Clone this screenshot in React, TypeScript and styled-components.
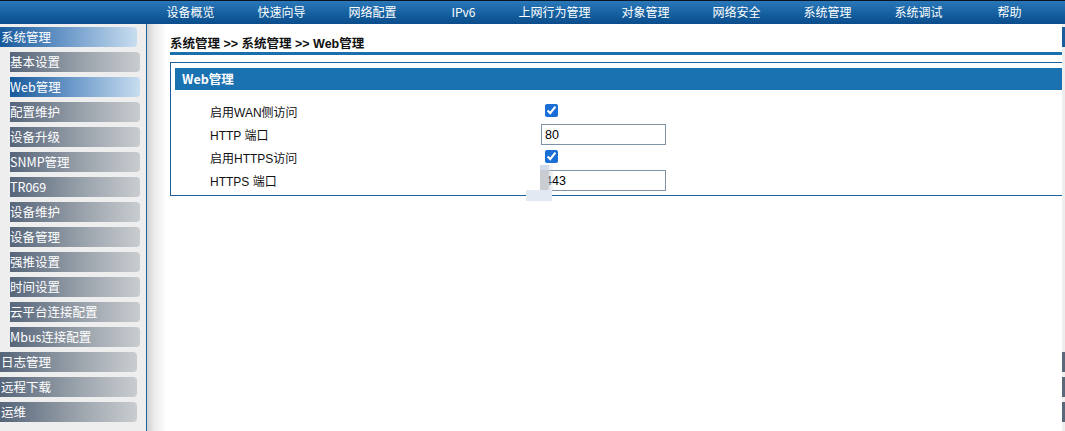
import React from "react";
import styled, { createGlobalStyle, css } from "styled-components";

const GlobalStyle = createGlobalStyle`
  html, body {
    margin: 0;
    padding: 0;
    background: #ffffff;
    overflow: hidden;
  }
  body {
    font-family: "Liberation Sans", "Noto Sans CJK SC", sans-serif;
  }
`;

const Page = styled.div`
  position: relative;
  width: 1065px;
  height: 431px;
  display: flex;
  flex-direction: column;
  overflow: hidden;
`;

/* 상단 메뉴 바 */
const TopBar = styled.nav`
  height: 24px;
  box-sizing: border-box;
  border-top: 1px solid #0a1626;
  background: linear-gradient(to bottom, #2a77b9 0%, #15609f 55%, #0b4c8c 100%);
  display: flex;
  padding-left: 145px;
`;

const NavItem = styled.div`
  width: 91px;
  text-align: center;
  color: #ffffff;
  font-family: "Noto Sans CJK SC", sans-serif;
  font-size: 12px;
  line-height: 21px;
  white-space: nowrap;
`;

const Body = styled.div`
  flex: 1;
  display: flex;
  min-height: 0;
`;

const Sidebar = styled.aside`
  width: 146px;
  flex-shrink: 0;
  background: #eeeeee;
  border-right: 1px solid #1f5f9f;
  padding-top: 3px;
  display: flex;
  flex-direction: column;
  gap: 5px;
  overflow: hidden;
`;

const MenuItem = styled.div<{ $sub?: boolean; $active?: boolean }>`
  height: 20px;
  box-sizing: border-box;
  margin-left: ${(p) => (p.$sub ? "10px" : "0")};
  width: ${(p) => (p.$sub ? "130px" : "137px")};
  border-radius: 0 4px 4px 0;
  background: ${(p) =>
    p.$active
      ? "linear-gradient(to right, #17599b 0%, #6f9ccb 50%, #c8ddef 100%)"
      : "linear-gradient(to right, #56657a 0%, #939ca6 50%, #c9cdd0 100%)"};
  color: #ffffff;
  font-family: "Noto Sans CJK SC", sans-serif;
  font-size: 12.5px;
  line-height: 19px;
  padding-left: ${(p) => (p.$sub ? "0" : "1px")};
  white-space: nowrap;
  overflow: hidden;
`;

const Main = styled.main`
  flex: 1;
  min-width: 0;
  overflow: hidden;
  background: linear-gradient(to right, #d2d2d2 0px, #ececec 8px, #ffffff 20px);
  padding-left: 23px;
`;

const Breadcrumb = styled.div`
  margin-right: -20px;
  padding: 13px 0 1px;
  line-height: 14px;
  font-size: 12.5px;
  font-weight: 700;
  color: #111111;
  border-bottom: 3px solid #1a6fad;
  white-space: nowrap;
`;

const Panel = styled.section`
  margin-top: 7px;
  margin-right: -20px;
  border: 1px solid #1c5f9f;
  padding: 5px 4px 3px 4px;
`;

const PanelHeader = styled.div`
  height: 22px;
  background: #1b72b1;
  color: #ffffff;
  font-family: "Noto Sans CJK SC", sans-serif;
  font-size: 12.5px;
  font-weight: 700;
  line-height: 22px;
  padding-left: 7px;
`;

const Form = styled.div`
  margin-top: 10px;
  padding-left: 35px;
  display: grid;
  grid-template-columns: 331px 1fr;
  grid-auto-rows: 23px;
  align-items: center;
`;

const Label = styled.div`
  font-size: 12px;
  color: #111111;
  white-space: nowrap;
`;

const Control = styled.div`
  display: flex;
  align-items: center;
`;

const Check = styled.input`
  width: 13px;
  height: 13px;
  margin: 0 0 2px 4px;
  accent-color: #1a6fd6;
`;

const TextBox = styled.input`
  width: 125px;
  height: 21px;
  box-sizing: border-box;
  margin: 0;
  border: 1px solid #7f93a8;
  padding: 0 3px;
  font-family: "Liberation Sans", sans-serif;
  font-size: 12.5px;
  color: #000000;
  outline: none;
`;

/* 오른쪽 끝에 살짝 보이는 다른 프레임 */
const RightStrip = styled.div`
  width: 3px;
  flex-shrink: 0;
  background: #eeeeee;
  padding-top: 3px;
  display: flex;
  flex-direction: column;
  gap: 5px;
`;

const StripBlock = styled.div<{ $tone: "none" | "blue" | "slate" }>`
  height: 20px;
  ${(p) =>
    p.$tone === "blue" &&
    css`
      background: #1b5c9c;
    `}
  ${(p) =>
    p.$tone === "slate" &&
    css`
      background: #5b687a;
    `}
`;

/* 화면 위에 남은 드래그 잔상 */
const Ghost = styled.div`
  position: absolute;
  left: 540px;
  top: 165px;
  width: 13px;
  height: 25px;
  background: linear-gradient(to bottom, #d3dcea 0, #d3dcea 5px, #c9ccd1 5px);
  -webkit-mask-image: linear-gradient(to right, #000 0, #000 8px, rgba(0, 0, 0, 0.35) 10px, rgba(0, 0, 0, 0.2) 13px);
  mask-image: linear-gradient(to right, #000 0, #000 8px, rgba(0, 0, 0, 0.35) 10px, rgba(0, 0, 0, 0.2) 13px);
`;

const GhostShade = styled.div`
  position: absolute;
  left: 526px;
  top: 190px;
  width: 26px;
  height: 11px;
  background: #e2e9f2;
`;

const navItems = [
  "设备概览",
  "快速向导",
  "网络配置",
  "IPv6",
  "上网行为管理",
  "对象管理",
  "网络安全",
  "系统管理",
  "系统调试",
  "帮助",
];

type Menu = { label: string; sub?: boolean; active?: boolean };

const menu: Menu[] = [
  { label: "系统管理", active: true },
  { label: "基本设置", sub: true },
  { label: "Web管理", sub: true, active: true },
  { label: "配置维护", sub: true },
  { label: "设备升级", sub: true },
  { label: "SNMP管理", sub: true },
  { label: "TR069", sub: true },
  { label: "设备维护", sub: true },
  { label: "设备管理", sub: true },
  { label: "强推设置", sub: true },
  { label: "时间设置", sub: true },
  { label: "云平台连接配置", sub: true },
  { label: "Mbus连接配置", sub: true },
  { label: "日志管理" },
  { label: "远程下载" },
  { label: "运维" },
];

const stripTones: ("none" | "blue" | "slate")[] = menu.map((_, i) =>
  i === 0 ? "blue" : i >= 13 ? "slate" : "none"
);

const App: React.FC = () => {
  return (
    <Page>
      <GlobalStyle />
      <TopBar>
        {navItems.map((n) => (
          <NavItem key={n}>{n}</NavItem>
        ))}
      </TopBar>

      <Body>
        <Sidebar>
          {menu.map((m) => (
            <MenuItem key={m.label} $sub={m.sub} $active={m.active}>
              {m.label}
            </MenuItem>
          ))}
        </Sidebar>

        <Main>
          <Breadcrumb>系统管理 &gt;&gt; 系统管理 &gt;&gt; Web管理</Breadcrumb>

          <Panel>
            <PanelHeader>Web管理</PanelHeader>
            <Form>
              <Label>启用WAN侧访问</Label>
              <Control>
                <Check type="checkbox" defaultChecked />
              </Control>

              <Label>HTTP 端口</Label>
              <Control>
                <TextBox type="text" defaultValue="80" />
              </Control>

              <Label>启用HTTPS访问</Label>
              <Control>
                <Check type="checkbox" defaultChecked />
              </Control>

              <Label>HTTPS 端口</Label>
              <Control>
                <TextBox type="text" defaultValue="443" />
              </Control>
            </Form>
          </Panel>
        </Main>

        <RightStrip>
          {stripTones.map((t, i) => (
            <StripBlock key={i} $tone={t} />
          ))}
        </RightStrip>
      </Body>

      <Ghost />
      <GhostShade />
    </Page>
  );
};

export default App;
